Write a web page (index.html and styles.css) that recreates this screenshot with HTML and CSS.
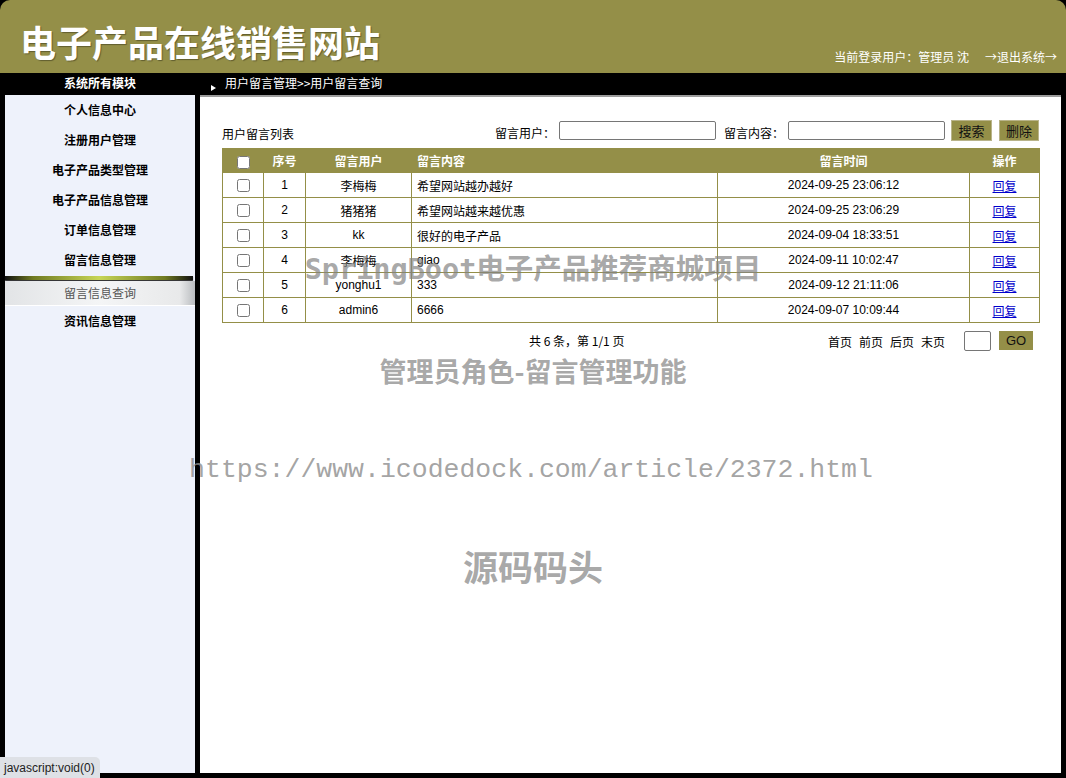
FILE: index.html
```html
<!DOCTYPE html>
<html lang="zh-CN">
<head>
<meta charset="utf-8">
<title>电子产品在线销售网站</title>
<link rel="stylesheet" href="styles.css">
</head>
<body>
<div class="page">
  <header class="header">
    <h1 class="title">电子产品在线销售网站</h1>
    <div class="userinfo">当前登录用户：管理员 沈<span class="logout">→退出系统→</span></div>
  </header>
  <div class="bar">
    <div class="bar-left">系统所有模块</div>
    <div class="bar-right"><span class="tri"></span>用户留言管理&gt;&gt;用户留言查询</div>
  </div>
  <div class="body">
    <nav class="sidebar">
      <a class="menu">个人信息中心</a>
      <a class="menu">注册用户管理</a>
      <a class="menu">电子产品类型管理</a>
      <a class="menu">电子产品信息管理</a>
      <a class="menu">订单信息管理</a>
      <a class="menu">留言信息管理</a>
      <div class="sep"></div>
      <a class="sub">留言信息查询</a>
      <a class="menu">资讯信息管理</a>
    </nav>
    <main class="content">
      <div class="toolbar">
        <span class="caption">用户留言列表</span>
        <div class="search">
          <label class="lbl">留言用户：</label><input class="field" type="text">
          <label class="lbl lbl2">留言内容：</label><input class="field" type="text">
          <button class="btn btn-search">搜索</button>
          <button class="btn btn-del">删除</button>
        </div>
      </div>
      <table class="grid">
        <colgroup>
          <col class="c1"><col class="c2"><col class="c3"><col class="c4"><col class="c5"><col class="c6">
        </colgroup>
        <thead>
          <tr><th><input type="checkbox" class="chk-head"></th><th>序号</th><th>留言用户</th><th class="left">留言内容</th><th>留言时间</th><th>操作</th></tr>
        </thead>
        <tbody>
          <tr><td><input type="checkbox"></td><td>1</td><td>李梅梅</td><td class="left">希望网站越办越好</td><td>2024-09-25 23:06:12</td><td><a href="#" class="link">回复</a></td></tr>
          <tr><td><input type="checkbox"></td><td>2</td><td>猪猪猪</td><td class="left">希望网站越来越优惠</td><td>2024-09-25 23:06:29</td><td><a href="#" class="link">回复</a></td></tr>
          <tr><td><input type="checkbox"></td><td>3</td><td>kk</td><td class="left">很好的电子产品</td><td>2024-09-04 18:33:51</td><td><a href="#" class="link">回复</a></td></tr>
          <tr><td><input type="checkbox"></td><td>4</td><td>李梅梅</td><td class="left">giao</td><td>2024-09-11 10:02:47</td><td><a href="#" class="link">回复</a></td></tr>
          <tr><td><input type="checkbox"></td><td>5</td><td>yonghu1</td><td class="left">333</td><td>2024-09-12 21:11:06</td><td><a href="#" class="link">回复</a></td></tr>
          <tr><td><input type="checkbox"></td><td>6</td><td>admin6</td><td class="left">6666</td><td>2024-09-07 10:09:44</td><td><a href="#" class="link">回复</a></td></tr>
        </tbody>
      </table>
      <div class="pager">
        <span class="total">共 6 条，第 1/1 页</span>
        <div class="pages">
          <span>首页</span><span>前页</span><span>后页</span><span>末页</span>
          <input class="pageno" type="text">
          <button class="btn btn-go">GO</button>
        </div>
      </div>
    </main>
  </div>
  <div class="wm wm1">SpringBoot电子产品推荐商城项目</div>
  <div class="wm wm2">管理员角色-留言管理功能</div>
  <div class="wm wm3">https://www.icodedock.com/article/2372.html</div>
  <div class="wm wm4">源码码头</div>
  <div class="status">javascript:void(0)</div>
</div>
</body>
</html>
```
FILE: styles.css
```css
html, body {
  margin: 0;
  padding: 0;
  background: #000;
}
body {
  font-family: "Liberation Sans", "Noto Sans CJK SC", sans-serif;
  font-size: 12px;
  color: #000;
}
.page {
  position: relative;
  width: 1066px;
  height: 778px;
  background: #000;
  overflow: hidden;
}
.header {
  height: 73px;
  background: #948f48;
  border-radius: 10px 10px 0 0;
  display: flex;
  justify-content: space-between;
  align-items: flex-end;
}
.title {
  margin: 0 0 12px 20px;
  font-family: "Noto Sans CJK SC", sans-serif;
  font-size: 36px;
  font-weight: 700;
  line-height: 40px;
  color: #fff;
  letter-spacing: 0;
  text-shadow: 1px 1px 1px rgba(0, 0, 0, 0.35);
}
.userinfo {
  color: #fff;
  font-family: "Noto Sans CJK SC", sans-serif;
  font-size: 12px;
  line-height: 16px;
  margin: 0 9px 8px 0;
}
.logout {
  margin-left: 16px;
}
.bar {
  height: 22px;
  display: flex;
  align-items: center;
  color: #fff;
  font-family: "Noto Sans CJK SC", sans-serif;
  font-size: 12px;
  line-height: 16px;
  padding-bottom: 2px;
  box-sizing: border-box;
}
.bar-left {
  width: 200px;
  text-align: center;
  font-weight: 700;
}
.bar-right {
  display: flex;
  align-items: center;
  padding-left: 10px;
}
.tri {
  width: 0;
  height: 0;
  border-top: 3px solid transparent;
  border-bottom: 3px solid transparent;
  border-left: 5px solid #fff;
  margin: 9px 9px 0 1px;
}
.body {
  display: flex;
  height: 678px;
  padding-left: 5px;
  gap: 5px;
}
.sidebar {
  width: 190px;
  background: #eef2fb;
  display: flex;
  flex-direction: column;
}
.menu {
  display: block;
  height: 30px;
  line-height: 30px;
  text-align: center;
  font-family: "Noto Sans CJK SC", sans-serif;
  font-weight: 700;
  font-size: 12px;
  color: #000;
}
.sep {
  height: 4px;
  margin: 1px 2px 0 0;
  background: linear-gradient(to right, #111 0%, #6f7a22 15%, #c7d657 50%, #6f7a22 85%, #111 100%);
  box-shadow: 0 1px 1px #222;
}
.sub {
  display: block;
  height: 24px;
  line-height: 24px;
  margin-top: 1px;
  text-align: center;
  font-family: "Noto Sans CJK SC", sans-serif;
  font-size: 12px;
  color: #555;
  background: linear-gradient(to right, #e2e4e6 0%, #f4f5f6 50%, #e8e9ea 92%, #b9bcbf 100%);
  border-bottom: 1px solid #fff;
}
.content {
  width: 861px;
  background: #fff;
  border-top: 2px solid #9c9c9c;
  padding: 22px 22px 0 22px;
  box-sizing: border-box;
}
.toolbar {
  display: flex;
  justify-content: space-between;
  align-items: center;
  height: 23px;
  margin-bottom: 6px;
}
.caption {
  font-family: "Noto Sans CJK SC", sans-serif;
  padding-top: 5px;
}
.search {
  display: flex;
  align-items: center;
}
.lbl {
  font-family: "Noto Sans CJK SC", sans-serif;
  padding-top: 4px;
  margin-right: 4px;
}
.lbl2 {
  margin-left: 8px;
}
.field {
  width: 157px;
  height: 19px;
  box-sizing: border-box;
  border: 1px solid #767676;
  border-radius: 2px;
  padding: 0 2px;
  margin: 0;
}
.btn {
  background: #948f48;
  border: 1px solid #b9b48a;
  color: #111;
  font-family: "Noto Sans CJK SC", sans-serif;
  font-size: 13px;
  height: 21px;
  padding: 0 5px;
  margin: 0;
  line-height: 19px;
  cursor: pointer;
}
.btn-search {
  margin-left: 6px;
  width: 41px;
}
.btn-del {
  margin-left: 7px;
  width: 40px;
}
.grid {
  width: 817px;
  border-collapse: collapse;
  table-layout: fixed;
}
.c1 { width: 41px; }
.c2 { width: 42px; }
.c3 { width: 106px; }
.c4 { width: 306px; }
.c5 { width: 252px; }
.c6 { width: 70px; }
.grid th, .grid td {
  border: 1px solid #948f48;
  text-align: center;
  padding: 0;
  font-size: 12px;
}
.grid th {
  background: #948f48;
  color: #fff;
  height: 23px;
  font-family: "Noto Sans CJK SC", sans-serif;
  font-weight: 700;
}
.grid td {
  height: 24px;
}
.grid .left {
  text-align: left;
  padding-left: 5px;
}
.grid input[type=checkbox] {
  margin: 0;
  width: 13px;
  height: 13px;
  vertical-align: middle;
}
.link {
  color: #0000cc;
  text-decoration: underline;
}
.pager {
  display: flex;
  align-items: center;
  height: 33px;
  margin-top: 1px;
}
.total {
  margin-left: 307px;
  font-family: "Noto Sans CJK SC", sans-serif;
}
.pages {
  margin-left: auto;
  display: flex;
  align-items: center;
  gap: 7px;
  font-family: "Noto Sans CJK SC", sans-serif;
}
.pages span {
  padding-top: 2px;
}
.pageno {
  width: 27px;
  height: 20px;
  box-sizing: border-box;
  border: 1px solid #767676;
  border-radius: 2px;
  margin: 0 0 0 12px;
}
.btn-go {
  margin: 0 6px 0 1px;
  width: 34px;
  height: 19px;
  font-family: "Liberation Sans", sans-serif;
  font-size: 13px;
  border: none;
  line-height: 19px;
  padding: 0;
}
.wm {
  position: absolute;
  left: 0;
  width: 1066px;
  text-align: center;
  color: rgba(130, 130, 130, 0.7);
  font-weight: 700;
  white-space: nowrap;
  pointer-events: none;
}
.wm1 {
  top: 250px;
  font-family: "DejaVu Sans Mono", "Noto Sans CJK SC", monospace;
  font-size: 28.5px;
  line-height: 40px;
}
.wm2 {
  top: 352px;
  font-family: "Noto Sans CJK SC", sans-serif;
  font-size: 27px;
  line-height: 38px;
}
.wm3 {
  top: 452px;
  left: -2px;
  font-family: "Liberation Mono", monospace;
  font-weight: 400;
  font-size: 26.5px;
  line-height: 36px;
  color: rgba(140, 140, 140, 0.8);
}
.wm4 {
  top: 544px;
  font-family: "Noto Sans CJK SC", sans-serif;
  font-size: 35px;
  line-height: 44px;
}
.status {
  position: absolute;
  left: 0;
  bottom: 0;
  height: 21px;
  line-height: 22px;
  padding: 0 5px 0 4px;
  background: #dee1e6;
  color: #222;
  font-size: 12px;
  border-top-right-radius: 5px;
}
```
